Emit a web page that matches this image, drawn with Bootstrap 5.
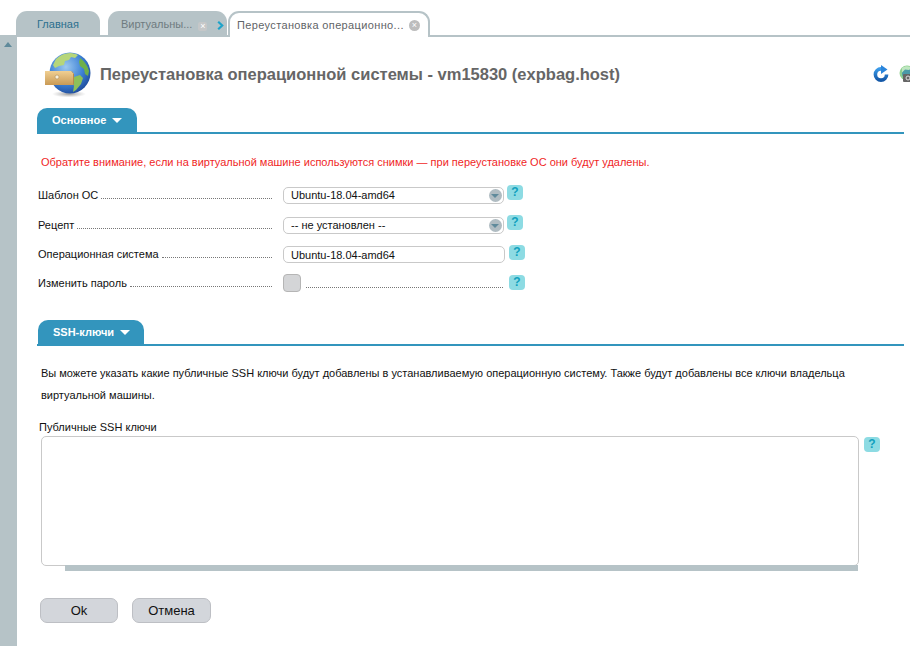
<!DOCTYPE html>
<html lang="ru">
<head>
<meta charset="utf-8">
<title>Переустановка операционной системы</title>
<link href="https://cdn.jsdelivr.net/npm/bootstrap@5.3.0/dist/css/bootstrap.min.css" rel="stylesheet">
<style>
html,body{height:646px;overflow:hidden;background:#fff}
body{font-family:"Liberation Sans",Arial,sans-serif;font-size:11px;color:#111;line-height:14px}
.tabstrip{height:37px;padding:11px 0 0 16px;border-bottom:2px solid #b6c3c7;gap:8px}
.tb{height:25px;border-radius:11px 11px 0 0;background:#b6c3c7;line-height:27px;font-size:11px;white-space:nowrap}
.tb-home{width:84px;padding-left:21px;color:#2b6f8e}
.tb-virt{width:119px;padding-left:13px;color:#6f7b80;margin-right:-7px;position:relative}
.tb-x{display:inline-flex;width:9px;height:9px;align-items:center;justify-content:center;margin-left:6px;font-size:9px;line-height:9px;color:#fff;vertical-align:-1px;background:#c5c7c8;border-radius:2px}
.tb-next{position:absolute;left:109px;top:10px;display:block}
.tb-cur{width:202px;height:26px;padding-left:7px;background:#fff;color:#5f6467;border:2px solid #b6c3c7;border-bottom:0;margin-bottom:-2px;line-height:24px;border-radius:11px 11px 0 0;position:relative;letter-spacing:.36px;white-space:nowrap}
.tb-close{position:absolute;right:8px;top:7px;width:11px;height:11px;border-radius:50%;background:#bdbdbd;color:#fff;font-size:9px;line-height:11px;text-align:center;letter-spacing:0}
.page{height:609px}
.sidebar{width:17px;background:#b6c3c7;flex:none;padding:5px 0 0 4px}
.up{width:0;height:0;border:4px solid transparent;border-top:0;border-bottom:5px solid #5f8a9b}
.content{flex:1;min-width:0;position:relative}
.headrow{height:71px;padding-left:27px;align-items:flex-start}
.globe{width:48px;height:47px;flex:none;margin-top:14px}
.ttl{margin:28px 0 0 8px;font-size:16.5px;line-height:19px;font-weight:bold;color:#666;white-space:nowrap}
.tools{position:absolute;right:0;top:28px;gap:10px;width:37px;overflow:hidden}
.tools svg{flex:none}
.sect{margin:0 6px 0 20px;height:26px;border-bottom:2px solid #3395bd}
.sect-tab{background:#3395bd;border-radius:10px 10px 0 0;color:#fff;font-weight:bold;line-height:24px;padding-left:15px;font-size:11px;margin-bottom:-2px;height:26px}
.sect-a{width:100px}
.sect-b{width:106px;margin-left:1px}
.sect2{margin-top:15px}
.caret-w{display:inline-block;width:0;height:0;border:5px solid transparent;border-bottom:0;border-top:5px solid #fff;margin-left:3px;vertical-align:1px}
.warn{margin:21px 0 0 24px;color:#f01f1f;height:14px;white-space:nowrap}
.frm{margin:16px 0 0 21px}
.frow{height:30px;align-items:flex-start}
.lbl{width:234px;flex:none;height:17px;align-items:flex-end;white-space:nowrap}
.dots{flex:1;border-bottom:1px dotted #777;margin:0 0 3px 3px}
.lbl-low{height:16px}
.lbl-lower{height:15px}
.ctl{width:221px;margin:2px 3px 0 11px;flex:none;position:relative}
.ctl-in{width:222px;margin-top:1px;margin-right:4px}
.ctl-ch{width:222px;margin-top:-1px;margin-right:4px}
.form-select.fld,.form-control.fld{height:17px;min-height:0;padding:0 7px;border:1px solid #c9c9c9;border-radius:5px;font-size:11px;line-height:15px;color:#111;background-image:none;background-color:#fff;box-shadow:none}
.sel-btn{position:absolute;right:2px;top:2px;width:13px;height:13px;border-radius:50%;background:#b0bcc2;pointer-events:none}
.sel-btn::after{content:"";position:absolute;left:2px;top:5px;border:4px solid transparent;border-bottom:0;border-top:4px solid #5f8a9b}
.hlp{width:16px;height:15px;border-radius:4px;background:#8ddbe3;color:#11a0bd;font-weight:bold;font-size:12px;line-height:15px;text-align:center;flex:none}
.chk{width:18px;height:18px;border:1px solid #b5b5b5;border-radius:4px;background:#d4d5d7;flex:none}
.lead-d{flex:1;border-bottom:1px dotted #777;height:14px;margin:0 2px 0 5px}
.para{margin:17px 20px 0 24px;line-height:21.5px}
.ta-lab{margin:14px 0 0 22px;height:14px}
.ta-row{margin:2px 0 0 24px;align-items:flex-start}
.ta-w{width:818px;position:relative;flex:none;height:135px}
textarea.form-control.fld-ta{width:818px;height:130px;min-height:0;resize:none;border:1px solid #c9c9c9;border-radius:5px;box-shadow:none;display:block}
.ta-bar{height:6px;background:#b6c3c7;margin:-1px 1px 0 24px}
.hlp-ta{margin:1px 0 0 5px}
.acts{margin:27px 0 0 23px;gap:14px}
.btn.act{height:25px;padding:0;background:#d3d6db;border:1px solid #bdbfc4;border-radius:7px;color:#111;font-size:13px;line-height:23px}
.btn-ok{width:78px}.btn-cn{width:79px}
</style>
</head>
<body>
<div class="tabstrip d-flex">
  <div class="tb tb-home">Главная</div>
  <div class="tb tb-virt">Виртуальны...<span class="tb-x">×</span><svg class="tb-next" width="7" height="9" viewBox="0 0 7 9"><path d="M1.2 .8 5.2 4.5 1.2 8.2" fill="none" stroke="#1ea3c9" stroke-width="2.2"/></svg></div>
  <div class="tb-cur">Переустановка операционно...<span class="tb-close">×</span></div>
</div>
<div class="page d-flex">
  <div class="sidebar"><div class="up"></div></div>
  <div class="content">
    <div class="headrow d-flex">
      <svg class="globe" viewBox="0 0 48 47">
        <defs>
          <radialGradient id="oc" cx=".4" cy=".35" r=".75"><stop offset="0" stop-color="#9cc8f0"/><stop offset=".55" stop-color="#3f83d6"/><stop offset="1" stop-color="#173f8e"/></radialGradient>
          <radialGradient id="sh" cx=".5" cy=".5" r=".5"><stop offset="0" stop-color="#555" stop-opacity=".6"/><stop offset="1" stop-color="#888" stop-opacity="0"/></radialGradient>
          <linearGradient id="dr" x1="0" y1="0" x2="0" y2="1"><stop offset="0" stop-color="#f0cf92"/><stop offset="1" stop-color="#c99a55"/></linearGradient>
          <linearGradient id="rf" x1="0" y1="0" x2="0" y2="1"><stop offset="0" stop-color="#3a9ae8"/><stop offset="1" stop-color="#1458a8"/></linearGradient>
        </defs>
        <ellipse cx="25" cy="43" rx="17" ry="3.5" fill="url(#sh)"/>
        <circle cx="26" cy="22" r="20.5" fill="url(#oc)"/>
        <path d="M12 8c4-4 9-6 14-6 3 0 6 1 8 2l-3 3-4-1-2 3-4 1-1 4-5 1-4 2-2-3z" fill="#b6d67a"/>
        <path d="M36 7c4 3 8 8 9 13l-1 5-3-2-1-5-4-3-1-4z" fill="#6fb04a"/>
        <path d="M30 26l6-2 3 3-2 6-5 6-3 2 1-6-2-5z" fill="#8cc05a"/>
        <path d="M1 20h26l3 3v10l-1 1H1z" fill="url(#dr)"/>
        <path d="M27 20l3 3v10l-1 1V21z" fill="#b58a4c"/>
        <circle cx="13" cy="26" r="2" fill="#f8f0dc" stroke="#a88248" stroke-width=".5"/>
      </svg>
      <div class="ttl">Переустановка операционной системы - vm15830 (expbag.host)</div>
      <div class="tools d-flex">
        <svg width="16" height="17" viewBox="0 0 16 17"><path d="M8 3.9a5.6 5.6 0 1 0 5.6 5.6" fill="none" stroke="url(#rf)" stroke-width="3.6"/><path d="M8 0 14.5 4.5 8 9z" fill="#2a85dc"/></svg>
        <svg width="16" height="17" viewBox="0 0 16 17"><circle cx="8" cy="8" r="7.5" fill="#8fd08f"/><circle cx="8.5" cy="8.5" r="5.5" fill="#4a9aa8"/><path d="M3 3c3-2.5 7-2.5 10 0l-3 2-4-.5-3 3z" fill="#bfe7c0"/><rect x="4" y="9" width="11" height="8" rx="1" fill="#666"/><circle cx="9" cy="13" r="2" fill="none" stroke="#ddd"/></svg>
      </div>
    </div>

    <div class="sect"><div class="sect-tab sect-a">Основное <span class="caret-w"></span></div></div>
    <div class="warn">Обратите внимание, если на виртуальной машине используются снимки — при переустановке ОС они будут удалены.</div>

    <div class="frm">
      <div class="frow d-flex">
        <div class="lbl d-flex"><span>Шаблон ОС</span><span class="dots"></span></div>
        <div class="ctl"><select class="form-select fld"><option>Ubuntu-18.04-amd64</option></select><span class="sel-btn"></span></div>
        <div class="hlp">?</div>
      </div>
      <div class="frow d-flex">
        <div class="lbl d-flex"><span>Рецепт</span><span class="dots"></span></div>
        <div class="ctl"><select class="form-select fld"><option>-- не установлен --</option></select><span class="sel-btn"></span></div>
        <div class="hlp">?</div>
      </div>
      <div class="frow d-flex">
        <div class="lbl lbl-low d-flex"><span>Операционная система</span><span class="dots"></span></div>
        <div class="ctl ctl-in"><input class="form-control fld" value="Ubuntu-18.04-amd64"></div>
        <div class="hlp">?</div>
      </div>
      <div class="frow d-flex">
        <div class="lbl lbl-lower d-flex"><span>Изменить пароль</span><span class="dots"></span></div>
        <div class="ctl ctl-ch d-flex"><div class="chk"></div><div class="lead-d"></div></div>
        <div class="hlp">?</div>
      </div>
    </div>

    <div class="sect sect2"><div class="sect-tab sect-b">SSH-ключи <span class="caret-w"></span></div></div>
    <div class="para">Вы можете указать какие публичные SSH ключи будут добавлены в устанавливаемую операционную систему. Также будут добавлены все ключи владельца виртуальной машины.</div>
    <div class="ta-lab">Публичные SSH ключи</div>
    <div class="ta-row d-flex">
      <div class="ta-w"><textarea class="form-control fld-ta"></textarea><div class="ta-bar"></div></div>
      <div class="hlp hlp-ta">?</div>
    </div>
    <div class="acts d-flex">
      <button class="btn act btn-ok">Ok</button>
      <button class="btn act btn-cn">Отмена</button>
    </div>
  </div>
</div>
<script src="https://cdn.jsdelivr.net/npm/bootstrap@5.3.0/dist/js/bootstrap.bundle.min.js"></script>
</body>
</html>
